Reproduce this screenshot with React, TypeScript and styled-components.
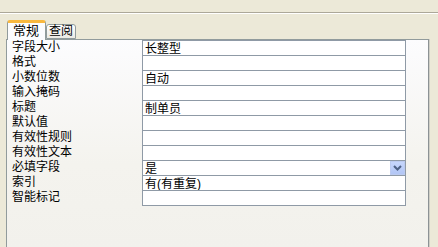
import styled, { createGlobalStyle } from 'styled-components'
import { Fragment } from 'react'

const GlobalStyle = createGlobalStyle`
  html, body {
    margin: 0;
    padding: 0;
    background: #ece9d8;
    overflow: hidden;
  }
  body {
    font-family: "Liberation Sans", "Noto Sans CJK SC", sans-serif;
    font-size: 12px;
    color: #000;
  }
`

const Page = styled.div`
  width: 438px;
  height: 247px;
  display: flex;
  flex-direction: column;
`
const TopStrip = styled.div`
  height: 12px;
  border-bottom: 1px solid #aca899;
  box-shadow: 0 1px 0 #fff;
  flex: none;
`
const TabRow = styled.div`
  display: flex;
  align-items: flex-end;
  height: 19px;
  margin-top: 7px;
  padding-left: 7px;
  position: relative;
  z-index: 1;
  flex: none;
`
const Tab = styled.div<{ $active?: boolean }>`
  box-sizing: border-box;
  height: ${p => (p.$active ? '20px' : '15px')};
  margin-bottom: ${p => (p.$active ? '-1px' : '0')};
  padding: ${p => (p.$active ? '0 6px 0 5px' : '0 2px')};
  border: 1px solid #919b9c;
  border-bottom: ${p => (p.$active ? 'none' : '1px solid #919b9c')};
  border-top: ${p => (p.$active ? '3px solid #f9b83e' : '1px solid #919b9c')};
  border-radius: 3px 3px 0 0;
  background: ${p => (p.$active ? '#fcfcfe' : 'linear-gradient(#ffffff, #ecebe5)')};
  line-height: ${p => (p.$active ? '15px' : '13px')};
  font-size: ${p => (p.$active ? '13px' : '12px')};
  white-space: nowrap;
`
const Panel = styled.div`
  flex: 1;
  margin: 0 9px 0 6px;
  border: 1px solid #919b9c;
  border-bottom: none;
  border-right-color: #8c9295;
  box-shadow: 1px 0 0 #d0cfc6;
  background: linear-gradient(#fcfcfe, #f4f3ee 60%, #f2f1ec);
  display: flex;
`
const Grid = styled.div`
  display: grid;
  grid-template-columns: 135px 264px;
  align-content: start;
`
const Label = styled.div`
  height: 15px;
  line-height: 15px;
  padding-left: 5px;
  white-space: nowrap;
`
const Value = styled.div<{ $last?: boolean }>`
  box-sizing: border-box;
  position: relative;
  height: ${p => (p.$last ? '16px' : '15px')};
  line-height: 14px;
  padding: 1px 0 0 2px;
  background: #fff;
  border-left: 1px solid #8f9aa6;
  border-right: 1px solid #8f9aa6;
  border-top: 1px solid #8f9aa6;
  border-bottom: ${p => (p.$last ? '1px solid #8f9aa6' : 'none')};
  white-space: nowrap;
`
const DropButton = styled.div`
  position: absolute;
  right: 0;
  top: 0;
  width: 15px;
  height: 14px;
  box-sizing: border-box;
  background: linear-gradient(#c6d6fc, #b2c6f5);
  border: 1px solid #bccbf0;
  display: flex;
  align-items: center;
  justify-content: center;
`

const rows: { label: string; value?: string; drop?: boolean }[] = [
  { label: '字段大小', value: '长整型' },
  { label: '格式' },
  { label: '小数位数', value: '自动' },
  { label: '输入掩码' },
  { label: '标题', value: '制单员' },
  { label: '默认值' },
  { label: '有效性规则' },
  { label: '有效性文本' },
  { label: '必填字段', value: '是', drop: true },
  { label: '索引', value: '有(有重复)' },
  { label: '智能标记' },
]

const App = (): JSX.Element => {
  return (
    <>
      <GlobalStyle />
      <Page>
        <TopStrip />
        <TabRow>
          <Tab $active>常规</Tab>
          <Tab>查阅</Tab>
        </TabRow>
        <Panel>
          <Grid>
            {rows.map((r, i) => (
              <Fragment key={i}>
                <Label>{r.label}</Label>
                <Value $last={i === rows.length - 1}>
                  {r.value}
                  {r.drop && (
                    <DropButton>
                      <svg width="9" height="6" viewBox="0 0 9 6">
                        <path d="M1 1 L4.5 4.5 L8 1" stroke="#4d6185" strokeWidth="2" fill="none" />
                      </svg>
                    </DropButton>
                  )}
                </Value>
              </Fragment>
            ))}
          </Grid>
        </Panel>
      </Page>
    </>
  )
}

export default App
